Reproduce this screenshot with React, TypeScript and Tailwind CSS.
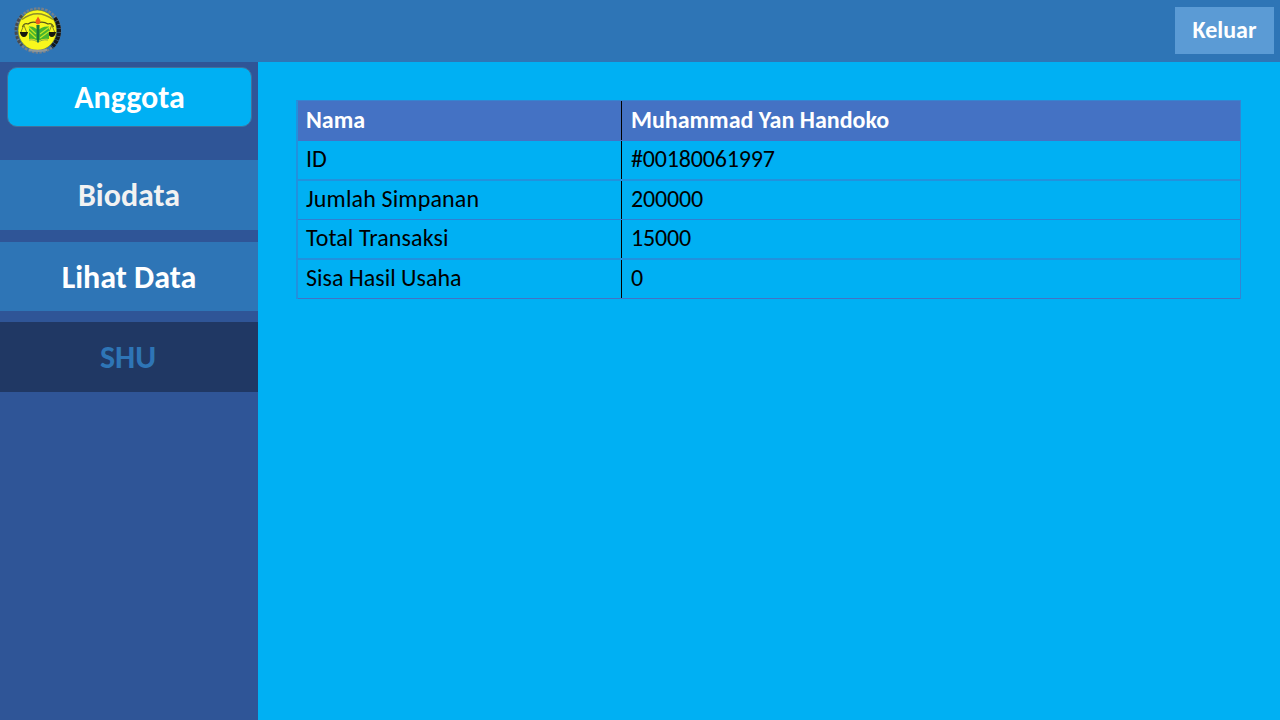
const rows = [
  { label: "ID", value: "#00180061997", ls: "tracking-[0px]", vs: "tracking-[-0.17px]", line: "h-[2px] bg-[#2291dd]" },
  { label: "Jumlah Simpanan", value: "200000", ls: "tracking-[0.15px]", vs: "tracking-[-0.17px]", line: "h-px bg-[#2f80d2]" },
  { label: "Total Transaksi", value: "15000", ls: "tracking-[0.1px]", vs: "tracking-[-0.17px]", line: "h-[2px] bg-[#2291dd]" },
  { label: "Sisa Hasil Usaha", value: "0", ls: "tracking-[0px]", vs: "tracking-[-0.17px]", line: "h-px bg-[#4472c4]" },
];

function Logo() {
  return (
    <svg className="mb-[2px] h-[48px] w-[48px]" viewBox="0 0 48 48">
      <circle cx="24" cy="24.5" r="22" fill="none" stroke="#77808a" strokeWidth="2.4" strokeDasharray="2.6 1.2" />
      <path d="M8 9.5A21.8 21.8 0 0 0 8 39.5" fill="none" stroke="#454a50" strokeWidth="3" strokeDasharray="3 1.4" />
      <path d="M40.5 12A21.5 21.5 0 0 1 37.5 41" fill="none" stroke="#15181a" strokeWidth="4.4" strokeDasharray="3.4 .5" />
      <ellipse cx="23.3" cy="24.2" rx="19.2" ry="20.2" fill="#f8f71c" stroke="#77791c" strokeWidth=".6" />
      <path d="M8.5 21Q10 16.5 14 18Q18 15 23.5 17Q29 15 34 18Q38 16.5 39.5 21" fill="none" stroke="#55561a" strokeWidth="1.2" />
      <path d="M8 13.5Q23 2 39 13.5" fill="none" stroke="#8f8e2a" strokeWidth="1.3" />
      <path d="M9.8 19L6.6 27H13ZM37.8 19L34.6 27H41Z" fill="none" stroke="#7d7c1c" strokeWidth=".9" />
      <path d="M5.8 26H14Q13 31 9.9 31T5.8 26ZM33.8 26H42Q41 31 37.9 31T33.8 26Z" fill="#16180e" />
      <path d="M24 25Q21 20 15 20.5V33Q21 32 24 36Q27 32 35 33V20.5Q27 20 24 25Z" fill="#47b52e" />
      <path d="M14.5 21L22 28M14.5 25L22 32M35.5 21L26 28M35.5 25L26 32" stroke="#c4e824" strokeWidth="1.2" />
      <path d="M22.4 19H25.6L24.9 37H23.1Z" fill="#19793a" />
      <path d="M15 34Q21 33 24 37Q27 33 34 34" fill="none" stroke="#8dab45" strokeWidth="1" />
      <path d="M24 10.5Q25.5 13 26.4 14.5Q26.8 18 24 18.5Q21.2 18 21.6 14.5Q22.6 13.5 24 10.5Z" fill="#f25a1b" />
      <path d="M15 42.5Q24 45 33 42.5L33 45Q24 47 15 45Z" fill="#8d989d" />
    </svg>
  );
}

export default function App() {
  return (
    <div className="flex h-[720px] w-[1280px] flex-col overflow-hidden bg-[#00b0f3] font-['Carlito','Lato',sans-serif]">
      <header className="flex h-[62px] shrink-0 items-center justify-between bg-[#2e75b6] pr-[6px] pl-[14px]">
        <Logo />
        <button className="mb-px flex h-[47px] w-[99px] items-center justify-center bg-[#5b9bd5] pb-px text-[24px] font-bold text-white">Keluar</button>
      </header>
      <div className="flex min-h-0 flex-1">
        <aside className="flex w-[258px] shrink-0 flex-col bg-[#2f5597] text-[32px] font-bold text-white">
          <div className="mt-[5px] ml-[7px] flex h-[60px] w-[245px] items-center justify-center rounded-[10px] border border-[#41719c] bg-[#00b0f3] pt-[2px]">Anggota</div>
          <nav className="mt-[33px] flex flex-col">
            <a className="flex h-[70px] items-center justify-center bg-[#2e75b6] pt-[2px] text-[#f2f2f2]">Biodata</a>
            <a className="mt-[12px] flex h-[69px] items-center justify-center bg-[#2e75b6] pt-[2px]">Lihat Data</a>
            <a className="mt-[11px] flex h-[70px] items-center justify-center bg-[#203864] pt-[2px] pr-[2px] text-[#2e75b6]">SHU</a>
          </nav>
        </aside>
        <main className="flex-1 pt-[38px] pl-[38px] text-[24px] text-black">
          <div className="w-[945px] border-t border-r border-l-2 border-t-[#3385d2] border-r-[#3385d2] border-l-[#2291dd]">
            <div className="flex h-[39px] bg-[#4472c4] font-bold text-white">
              <div className="flex w-[324px] items-center border-r border-black pb-[2px] pl-2">Nama</div>
              <div className="flex items-center pb-[2px] pl-[9px]">Muhammad Yan Handoko</div>
            </div>
            <div className="h-px bg-[#4472c4]" />
            {rows.map((r) => (
              <div key={r.label}>
                <div className="flex h-[38px]">
                  <div className={`flex w-[324px] items-center border-r border-black pb-[2px] pl-2 ${r.ls}`}>{r.label}</div>
                  <div className={`flex items-center pb-[2px] pl-[9px] ${r.vs}`}>{r.value}</div>
                </div>
                <div className={r.line} />
              </div>
            ))}
          </div>
        </main>
      </div>
    </div>
  );
}
